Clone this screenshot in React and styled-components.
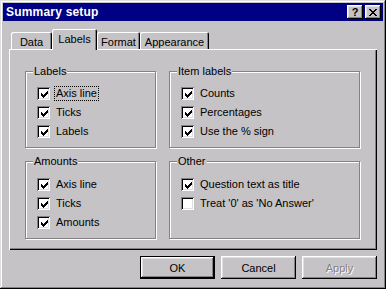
import React from 'react';
import styled, { createGlobalStyle } from 'styled-components';

const FACE = '#c6c3c6';
const SHADOW = '#848284';
const LIGHT = '#dfdfdf';

const GlobalStyle = createGlobalStyle`
  html, body {
    margin: 0;
    padding: 0;
    background: ${FACE};
  }
  body {
    font-family: "Liberation Sans", Arial, sans-serif;
    font-size: 11px;
    color: #000;
  }
`;

const Window = styled.div`
  width: 386px;
  height: 289px;
  box-sizing: border-box;
  padding: 3px;
  background: ${FACE};
  display: flex;
  flex-direction: column;
  box-shadow:
    inset -1px -1px 0 #000,
    inset 1px 1px 0 ${LIGHT},
    inset -2px -2px 0 ${SHADOW},
    inset 2px 2px 0 #fff;
`;

const TitleBar = styled.div`
  height: 18px;
  background: #000084;
  display: flex;
  align-items: center;
  padding: 0 2px 0 3px;
`;

const Title = styled.span`
  flex: 1;
  color: #fff;
  font-weight: bold;
  font-size: 12px;
  letter-spacing: 0.2px;
`;

const TitleButtons = styled.div`
  display: flex;
  gap: 2px;
`;

const TitleButton = styled.div`
  width: 16px;
  height: 14px;
  box-sizing: border-box;
  background: ${FACE};
  display: flex;
  align-items: center;
  justify-content: center;
  font-weight: bold;
  font-size: 11px;
  line-height: 1;
  box-shadow:
    inset -1px -1px 0 #000,
    inset 1px 1px 0 #fff,
    inset -2px -2px 0 ${SHADOW},
    inset 2px 2px 0 ${LIGHT};
`;

const Body = styled.div`
  flex: 1;
  display: flex;
  flex-direction: column;
  padding: 0 6px;
`;

const TabRow = styled.div`
  margin-top: 8px;
  height: 20px;
  display: flex;
  align-items: flex-end;
  padding-left: 2px;
  position: relative;
  z-index: 1;
`;

const Tab = styled.div`
  width: ${({ w }) => w}px;
  height: ${({ active }) => (active ? 21 : 17)}px;
  margin-bottom: ${({ active }) => (active ? -1 : 0)}px;
  box-sizing: border-box;
  background: ${FACE};
  border-radius: 2px 2px 0 0;
  display: flex;
  align-items: center;
  justify-content: center;
  padding-top: ${({ active }) => (active ? 0 : 2)}px;
  padding-bottom: ${({ active }) => (active ? 2 : 0)}px;
  box-shadow:
    inset 1px 1px 0 #fff,
    inset -1px 0 0 #000,
    inset -2px 0 0 ${SHADOW};
`;

const Panel = styled.div`
  height: 201px;
  box-sizing: border-box;
  padding: 22px 0 0 16px;
  display: grid;
  grid-template-columns: 131px 191px;
  grid-template-rows: 77px 78px;
  column-gap: 13px;
  row-gap: 13px;
  box-shadow:
    inset 1px 1px 0 #fff,
    inset -1px -1px 0 #000,
    inset -2px -2px 0 ${SHADOW};
`;

const Group = styled.div`
  position: relative;
  box-sizing: border-box;
  border: 1px solid ${SHADOW};
  box-shadow: inset 1px 1px 0 #fff, 1px 1px 0 #fff;
  padding: ${({ top }) => top}px 0 0 11px;
  display: flex;
  flex-direction: column;
`;

const Legend = styled.span`
  position: absolute;
  top: -8px;
  left: 7px;
  padding: 0 1px;
  background: ${FACE};
  line-height: 14px;
`;

const Row = styled.div`
  height: 19px;
  display: flex;
  align-items: center;
  gap: 5px;
  white-space: nowrap;
`;

const Box = styled.span`
  width: 13px;
  height: 13px;
  flex: none;
  box-sizing: border-box;
  background: #fff;
  display: flex;
  align-items: center;
  justify-content: center;
  box-shadow:
    inset 1px 1px 0 ${SHADOW},
    inset -1px -1px 0 #fff,
    inset 2px 2px 0 #000,
    inset -2px -2px 0 ${LIGHT};
  svg {
    margin: 1px 0 0 1px;
    display: block;
  }
`;

const Caption = styled.span`
  padding: 0 1px;
  line-height: 13px;
  outline: ${({ focused }) => (focused ? '1px dotted #000' : 'none')};
`;

const ButtonRow = styled.div`
  margin-top: 6px;
  display: flex;
  justify-content: flex-end;
  gap: 6px;
`;

const Button = styled.div`
  width: 75px;
  height: 23px;
  box-sizing: border-box;
  background: ${FACE};
  display: flex;
  align-items: center;
  justify-content: center;
  color: ${({ disabled }) => (disabled ? SHADOW : '#000')};
  text-shadow: ${({ disabled }) => (disabled ? '1px 1px 0 #fff' : 'none')};
  box-shadow: ${({ primary }) =>
    primary
      ? `inset 0 0 0 1px #000, inset -2px -2px 0 #000, inset 2px 2px 0 #fff, inset -3px -3px 0 ${SHADOW}, inset 3px 3px 0 ${LIGHT}`
      : `inset -1px -1px 0 #000, inset 1px 1px 0 #fff, inset -2px -2px 0 ${SHADOW}, inset 2px 2px 0 ${LIGHT}`};
`;

const Check = () => (
  <svg width="7" height="7" viewBox="0 0 7 7" shapeRendering="crispEdges">
    <rect x="6" y="0" width="1" height="1" />
    <rect x="5" y="1" width="2" height="1" />
    <rect x="0" y="2" width="1" height="1" />
    <rect x="4" y="2" width="3" height="1" />
    <rect x="0" y="3" width="2" height="1" />
    <rect x="3" y="3" width="3" height="1" />
    <rect x="0" y="4" width="5" height="1" />
    <rect x="1" y="5" width="3" height="1" />
    <rect x="2" y="6" width="1" height="1" />
  </svg>
);

const CloseGlyph = () => (
  <svg width="8" height="7" viewBox="0 0 8 7" shapeRendering="crispEdges">
    <path d="M0 0h2v1h-2zM6 0h2v1h-2zM1 1h2v1h-2zM5 1h2v1h-2zM2 2h4v1h-4zM3 3h2v1h-2zM2 4h4v1h-4zM1 5h2v1h-2zM5 5h2v1h-2zM0 6h2v1h-2zM6 6h2v1h-2z" />
  </svg>
);

const CheckItem = ({ label, checked = true, focused }) => (
  <Row>
    <Box>{checked && <Check />}</Box>
    <Caption focused={focused}>{label}</Caption>
  </Row>
);

const groups = [
  { title: 'Labels', top: 12, items: [{ label: 'Axis line', focused: true }, { label: 'Ticks' }, { label: 'Labels' }] },
  { title: 'Item labels', top: 12, items: [{ label: 'Counts' }, { label: 'Percentages' }, { label: 'Use the % sign' }] },
  { title: 'Amounts', top: 13, items: [{ label: 'Axis line' }, { label: 'Ticks' }, { label: 'Amounts' }] },
  { title: 'Other', top: 13, items: [{ label: 'Question text as title' }, { label: "Treat '0' as 'No Answer'", checked: false }] },
];

const tabs = [
  { label: 'Data', w: 41 },
  { label: 'Labels', w: 45, active: true },
  { label: 'Format', w: 43 },
  { label: 'Appearance', w: 69 },
];

export default function App() {
  return (
    <>
      <GlobalStyle />
      <Window>
        <TitleBar>
          <Title>Summary setup</Title>
          <TitleButtons>
            <TitleButton>?</TitleButton>
            <TitleButton>
              <CloseGlyph />
            </TitleButton>
          </TitleButtons>
        </TitleBar>
        <Body>
          <TabRow>
            {tabs.map((t) => (
              <Tab key={t.label} w={t.w} active={t.active}>
                {t.label}
              </Tab>
            ))}
          </TabRow>
          <Panel>
            {groups.map((g) => (
              <Group key={g.title} top={g.top}>
                <Legend>{g.title}</Legend>
                {g.items.map((it) => (
                  <CheckItem key={it.label} {...it} />
                ))}
              </Group>
            ))}
          </Panel>
          <ButtonRow>
            <Button primary>OK</Button>
            <Button>Cancel</Button>
            <Button disabled>Apply</Button>
          </ButtonRow>
        </Body>
      </Window>
    </>
  );
}
